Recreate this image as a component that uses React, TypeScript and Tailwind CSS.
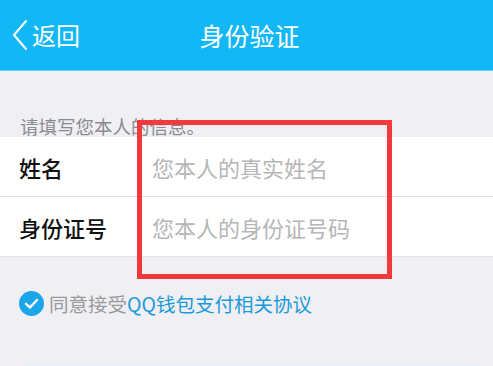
import React from 'react';

const font = { fontFamily: '"Noto Sans CJK SC", "Noto Sans", sans-serif' };

export default function App() {
  return (
    <div className="relative w-[493px] h-[366px] overflow-hidden bg-[#efeff4]" style={font}>
      {/* header */}
      <div className="relative h-[71px] bg-[#12b7f5] border-b border-[#5fd0f8] flex items-center justify-center">
        <div className="absolute left-[11px] top-0 h-full flex items-center text-white">
          <svg width="18" height="32" viewBox="0 0 18 32" className="mr-[3px]">
            <path d="M15 2 L3 16 L15 30" fill="none" stroke="white" strokeWidth="2" strokeLinecap="round" strokeLinejoin="round" />
          </svg>
          <span className="text-[24px] leading-none">返回</span>
        </div>
        <span className="text-white text-[25px] leading-none ml-[6px]">身份验证</span>
      </div>

      <div className="h-[66px] flex items-end pl-[20px] pb-[2px]">
        <span className="text-[18.5px] leading-none text-[#8a8a8f]">请填写您本人的信息。</span>
      </div>

      <div className="bg-white border-b border-[#e3e3e6]">
        <div className="h-[60px] flex items-center border-b border-[#e3e3e6]">
          <span className="w-[152px] pl-[19px] text-[22px] leading-none font-medium text-[#111]">姓名</span>
          <span className="text-[22px] leading-none text-[#b6b6b6]">您本人的真实姓名</span>
        </div>
        <div className="h-[59px] flex items-center">
          <span className="w-[152px] pl-[19px] text-[22px] leading-none font-medium text-[#111]">身份证号</span>
          <span className="text-[22px] leading-none text-[#b6b6b6]">您本人的身份证号码</span>
        </div>
      </div>

      <div className="mt-[34px] flex items-center pl-[19px]">
        <svg width="25" height="25" viewBox="0 0 25 25" className="mr-[5px]">
          <circle cx="12.5" cy="12.5" r="12.5" fill="#1aa6e8" />
          <path d="M7 12.8 L11 16.5 L18 9" fill="none" stroke="white" strokeWidth="2.4" strokeLinecap="round" strokeLinejoin="round" />
        </svg>
        <span className="text-[19.5px] text-[#9a9a9a] leading-none">同意接受</span>
        <span className="text-[19.5px] text-[#1a9ad8] leading-none">QQ钱包支付相关协议</span>
      </div>

      <div className="absolute left-[22px] right-[14px] top-[365px] h-[2px] bg-[#dff0fa]" />

      {/* red annotation frame */}
      <div className="absolute left-[137px] top-[120px] w-[255px] h-[159px] border-[5px] border-[#f23a3c]" />
    </div>
  );
}
